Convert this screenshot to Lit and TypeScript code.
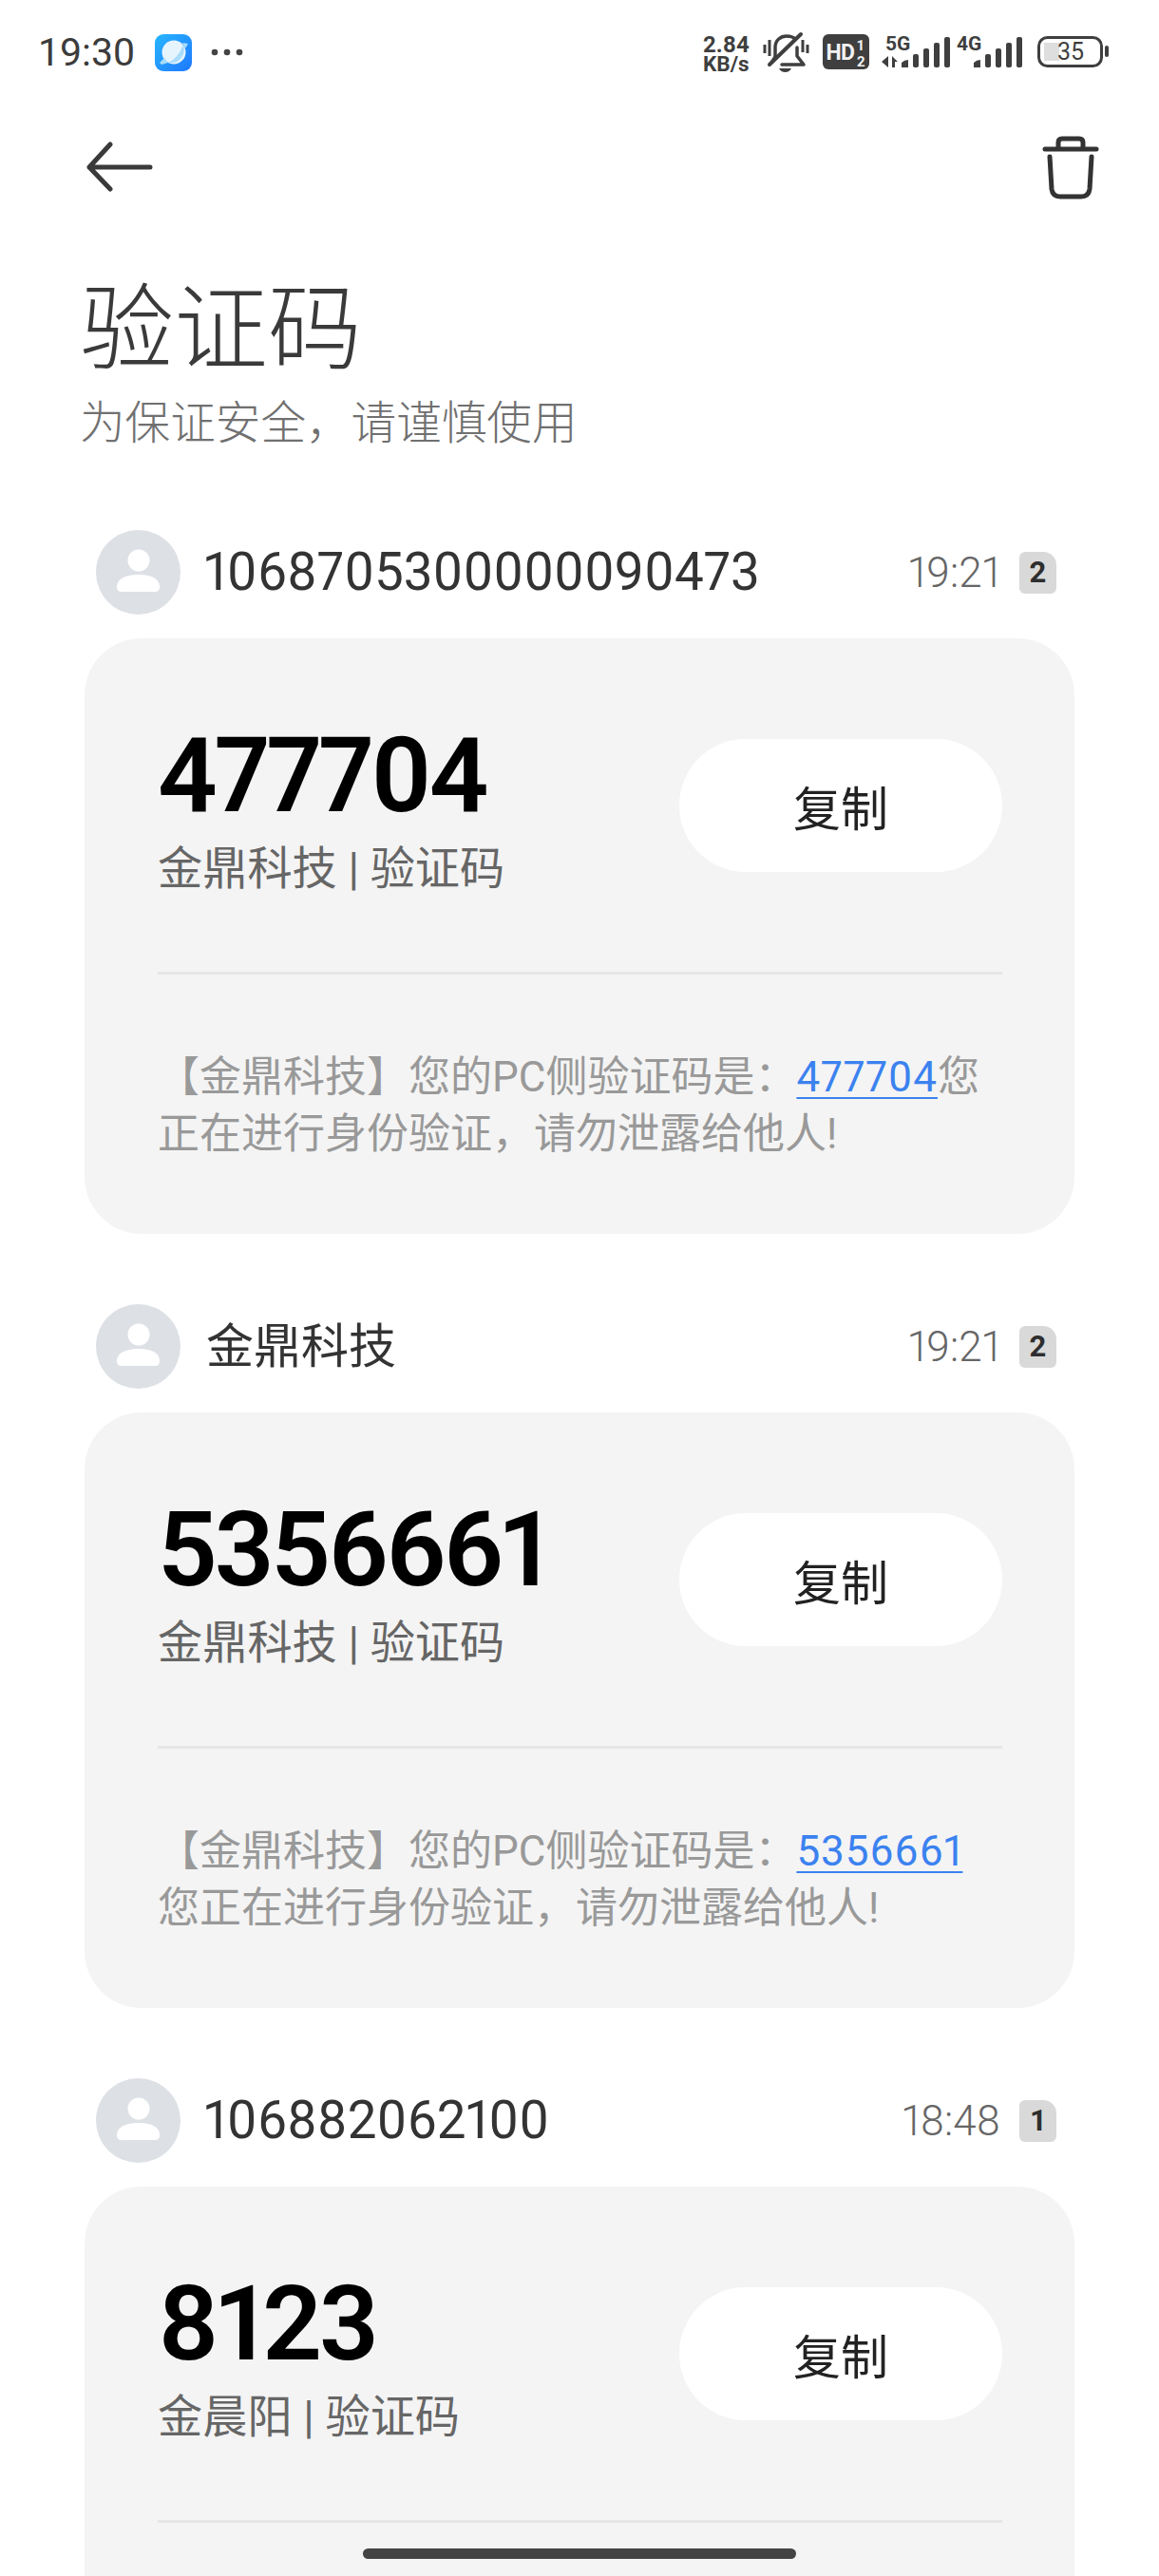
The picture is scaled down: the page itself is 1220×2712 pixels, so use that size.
import { LitElement, html, css, svg } from "lit";
import { customElement } from "lit/decorators.js";

interface Item { sender: string; cjk: boolean; time: string; count: number; code: string; label: string; before: string; after: string; }

const items: Item[] = [
  { sender: "1068705300000090473", cjk: false, time: "19:21", count: 2, code: "477704", label: "金鼎科技 | 验证码", before: "【金鼎科技】您的PC侧验证码是：", after: "您正在进行身份验证，请勿泄露给他人!" },
  { sender: "金鼎科技", cjk: true, time: "19:21", count: 2, code: "5356661", label: "金鼎科技 | 验证码", before: "【金鼎科技】您的PC侧验证码是：", after: "您正在进行身份验证，请勿泄露给他人!" },
  { sender: "106882062100", cjk: false, time: "18:48", count: 1, code: "8123", label: "金晨阳 | 验证码", before: "", after: "" },
];

const statusIcons = svg`
  <g fill="#3f3f3f" font-family="Roboto, sans-serif" font-weight="700">
    <text x="10" y="25" font-size="24">2.84</text>
    <text x="10" y="45" font-size="22.5">KB/s</text>
  </g>
  <g fill="none" stroke="#3f3f3f" stroke-width="3.5" stroke-linecap="round" stroke-linejoin="round">
    <path d="M86 30 V20 C86 12 92 8 98 8 C102 8 105 9 107 11"/>
    <path d="M109 20 V29 L116 38 H93"/>
    <path d="M86 30 L82 36"/>
    <path d="M80 38 L113 6" stroke-width="4"/>
    <path d="M75 17 V26 M80 12 V29 M115 12 V25 M120 17 V26" stroke-width="3" stroke-linecap="butt"/>
  </g>
  <path d="M90 42 H103 Q101 46 96.5 46 Q92 46 90 42Z" fill="#3f3f3f"/>
  <rect x="136" y="6" width="49" height="37" rx="6" fill="#3f3f3f"/>
  <g fill="#f1f1f1" font-family="Roboto, sans-serif" font-weight="700">
    <text x="139.500" y="33" font-size="23" letter-spacing="-0.8">HD</text>
    <text x="172" y="23" font-size="15">1</text>
    <text x="172" y="40" font-size="15">2</text>
  </g>
  <g fill="#3f3f3f" font-family="Roboto, sans-serif" font-weight="700" font-size="21">
    <text x="202" y="23">5G</text>
    <text x="277" y="23">4G</text>
  </g>
  <g fill="#3f3f3f">
    <path d="M205 29 V41 L198 35 Z M209 29 V41 H212 V35 H215 L209 29Z"/>
    <path d="M219 41 V36 Q222 33 226 33 V41 Z"/>
    <rect x="231" y="27" width="6" height="14" rx="2"/>
    <rect x="242" y="21" width="6" height="20" rx="2"/>
    <rect x="253" y="15" width="6" height="26" rx="2"/>
    <rect x="264" y="9" width="6" height="32" rx="2"/>
    <path d="M295 41 V36 Q298 33 302 33 V41 Z"/>
    <rect x="307" y="27" width="6" height="14" rx="2"/>
    <rect x="318" y="21" width="6" height="20" rx="2"/>
    <rect x="329" y="15" width="6" height="26" rx="2"/>
    <rect x="340" y="9" width="6" height="32" rx="2"/>
  </g>
  <rect x="363.5" y="9.5" width="66" height="30" rx="9" fill="none" stroke="#3f3f3f" stroke-width="3"/>
  <rect x="369" y="15" width="16" height="19" fill="#dedede"/>
  <rect x="433" y="18" width="4" height="12" rx="2" fill="#3f3f3f"/>
  <text x="383" y="33" font-size="25" fill="#3f3f3f" font-family="Roboto, sans-serif">35</text>
`;

@customElement("app-root")
export class AppRoot extends LitElement {
  static styles = css`
    :host { display: block; width: 1220px; height: 2712px; position: relative; overflow: hidden; background: #fff; font-family: Roboto, "Noto Sans CJK SC", sans-serif; font-variant-numeric: proportional-nums; }
    .status { height: 110px; display: flex; align-items: center; padding: 0 50px 0 40px; box-sizing: border-box; justify-content: space-between; }
    .status-left { display: flex; align-items: center; }
    .clock { font-size: 41px; color: #3c3c3c; width: 123px; line-height: 1; font-variant-numeric: normal; }
    .app { display: block; width: 39px; height: 39px; }
    .dots { display: block; margin-left: 20px; }
    .status-right { display: block; }
    .nav { height: 132px; display: flex; align-items: center; justify-content: space-between; padding: 0 62px 0 90px; }
    .nav svg { display: block; }
    .title { margin: 45px 0 0; padding-left: 84px; font-size: 99px; font-weight: 300; line-height: 120px; color: #3a3a3a; }
    .subtitle { padding-left: 84px; font-size: 47.6px; line-height: 60px; color: #707070; font-weight: 300; margin-top: 9px; }
    .list { padding: 82px 89px 0; display: flex; flex-direction: column; gap: 74px; }
    .head { display: flex; align-items: center; padding: 0 19px 0 12px; height: 89px; margin-bottom: 25px; }
    .avatar { width: 89px; height: 89px; border-radius: 50%; background: #dde0e5; display: block; flex: none; }
    .sender { margin-left: 25px; font-size: 54.8px; color: #333; flex: 1; line-height: 1; }
    .sender.cjk { font-size: 50px; margin-left: 27px; }
    .time { font-size: 44px; font-weight: 300; color: #666; line-height: 1; }
    .badge { margin-left: 20px; width: 39px; height: 44px; box-sizing: border-box; background: #d9d9d9; border-radius: 6px 14px 6px 6px; font-size: 31px; font-weight: 700; color: #2e2e2e; display: flex; align-items: center; justify-content: center; }
    .card { background: #f4f4f4; border-radius: 60px; padding: 106px 76px 0 77px; height: 627px; box-sizing: border-box; }
    .top { display: flex; justify-content: space-between; align-items: flex-start; height: 245px; border-bottom: 3px solid #e6e6e6; }
    .code { font-size: 110px; font-weight: 600; color: #000; line-height: 78px; letter-spacing: -3.2px; }
    .label { font-size: 47.2px; color: #666; font-weight: 400; line-height: 60px; margin-top: 29px; }
    .copy { width: 340px; height: 140px; border-radius: 70px; background: #fff; font-size: 50px; color: #222; display: flex; align-items: center; justify-content: center; }
    .msg { margin-top: 78px; font-size: 44px; line-height: 60px; color: #999; font-weight: 400; }
    .msg a { color: #3b82f0; letter-spacing: 0.9px; text-decoration: underline; text-underline-offset: 6px; text-decoration-thickness: 2px; }
    .home { position: absolute; left: 382px; top: 2683px; width: 456px; height: 11px; border-radius: 6px; background: #444; }
  `;

  private renderItem(it: Item) {
    return html`
      <section>
        <div class="head">
          <svg class="avatar" viewBox="0 0 89 89">
            <circle cx="45" cy="32" r="11.5" fill="#fff"/>
            <path d="M22 60 C22 50 34 47 45 47 C56 47 67 50 67 60 Q67 65 62 65 H27 Q22 65 22 60Z" fill="#fff"/>
          </svg>
          <div class="sender ${it.cjk ? "cjk" : ""}">${it.sender}</div>
          <div class="time">${it.time}</div>
          <div class="badge">${it.count}</div>
        </div>
        <div class="card">
          <div class="top">
            <div>
              <div class="code">${it.code}</div>
              <div class="label">${it.label}</div>
            </div>
            <div class="copy">复制</div>
          </div>
          ${it.before ? html`<div class="msg">${it.before}<a>${it.code}</a>${it.after}</div>` : ""}
        </div>
      </section>`;
  }

  render() {
    return html`
      <div class="status">
        <div class="status-left">
          <div class="clock">19:30</div>
          <svg class="app" viewBox="0 0 39 39">
            <defs><linearGradient id="g" x1="0" y1="0" x2="1" y2="1"><stop offset="0" stop-color="#28b6ff"/><stop offset="1" stop-color="#1e78ff"/></linearGradient></defs>
            <rect width="39" height="39" rx="9" fill="url(#g)"/>
            <circle cx="20" cy="19" r="12.5" fill="#e6f4fd"/>
            <path d="M30 11 Q33 20 26 27 Q21 31 14 30 Q24 26 30 11Z" fill="#a9dcfb"/>
            <path d="M5 30 L10 25 L14 30 L7 32Z M29 9 L35 10 L32 15Z" fill="#a9dcfb"/>
          </svg>
          <svg class="dots" width="34" height="10" viewBox="0 0 34 10" fill="#444">
            <circle cx="4" cy="5" r="3.3"/><circle cx="17" cy="5" r="3.3"/><circle cx="30" cy="5" r="3.3"/>
          </svg>
        </div>
        <svg class="status-right" width="440" height="50" viewBox="0 0 440 50">${statusIcons}</svg>
      </div>
      <div class="nav">
        <svg width="72" height="54" viewBox="0 0 72 54" fill="none" stroke="#3a3a3a" stroke-width="5" stroke-linecap="round" stroke-linejoin="round">
          <path d="M68 27 H4 M26 3 L4 27 L26 50"/>
        </svg>
        <svg width="62" height="70" viewBox="0 0 62 70" fill="none" stroke="#333" stroke-width="5" stroke-linecap="round" stroke-linejoin="round">
          <path d="M4 16 H58"/>
          <path d="M18 15 V9 Q18 5 22 5 H40 Q44 5 44 9 V15" />
          <path d="M9 24 L11 58 Q12 66 20 66 H42 Q50 66 51 58 L53 24"/>
        </svg>
      </div>
      <h1 class="title">验证码</h1>
      <div class="subtitle">为保证安全，请谨慎使用</div>
      <div class="list">${items.map((i) => this.renderItem(i))}</div>
      <div class="home"></div>
    `;
  }
}
